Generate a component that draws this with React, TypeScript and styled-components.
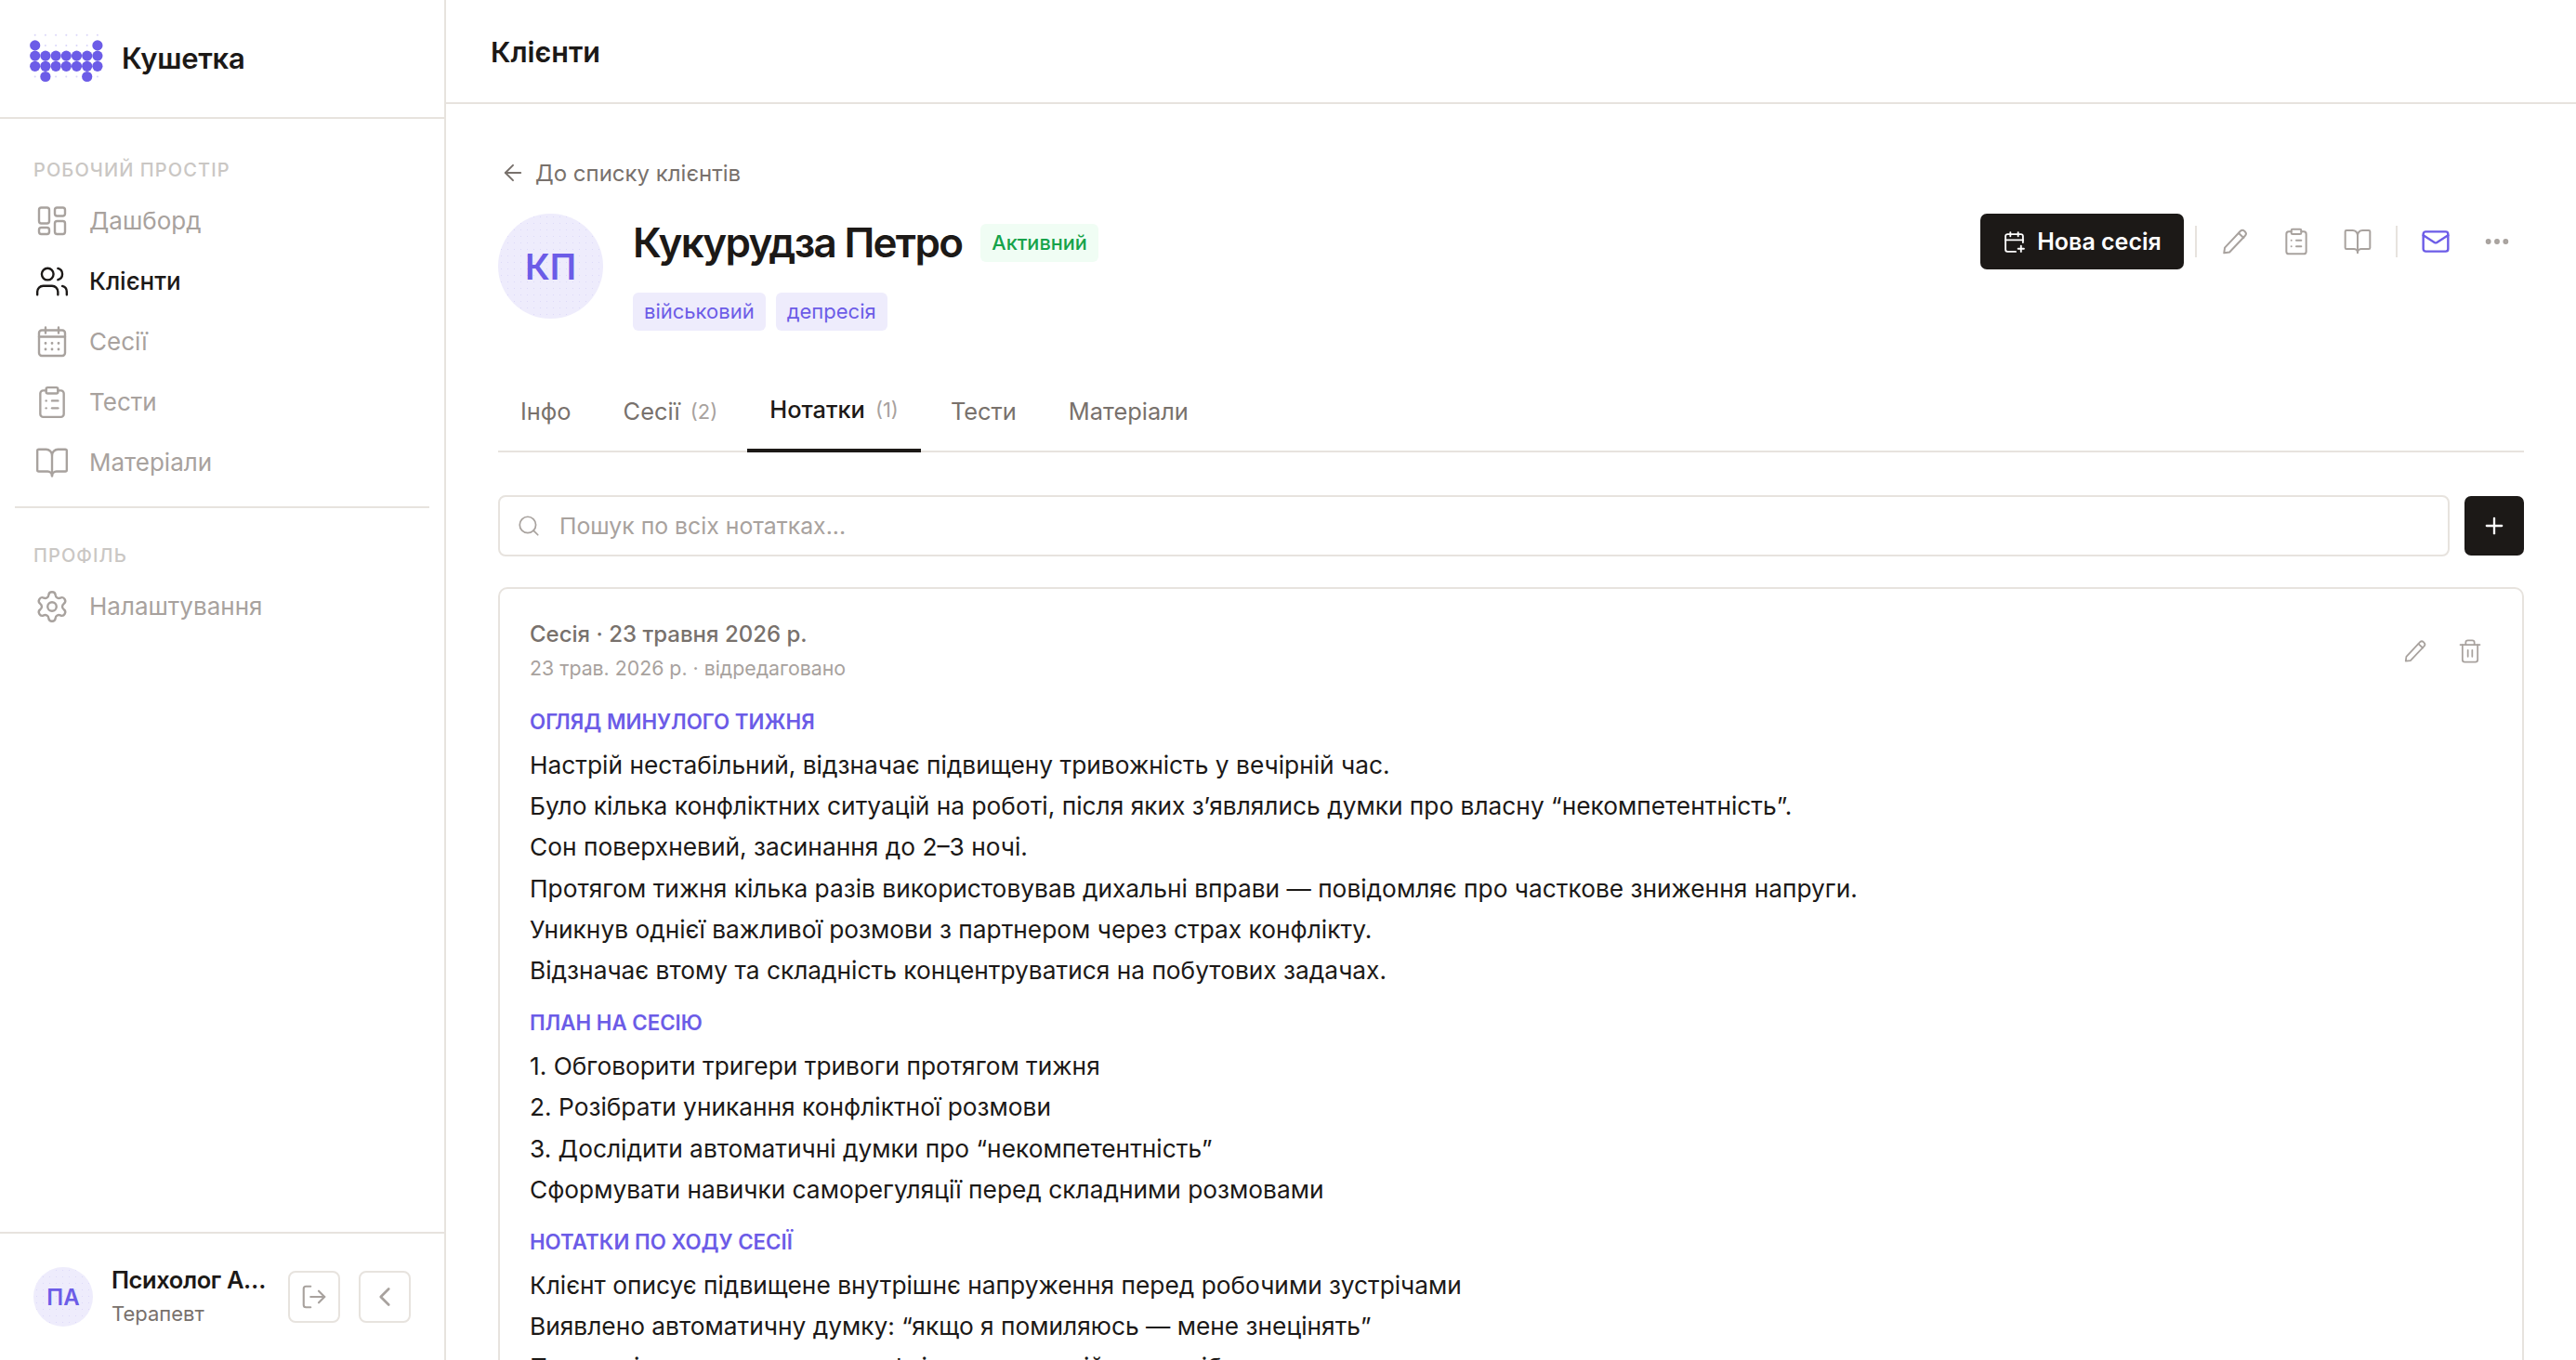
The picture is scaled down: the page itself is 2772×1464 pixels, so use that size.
import React from 'react';
import styled, { createGlobalStyle } from 'styled-components';
import {
  ArrowLeft, Search, Plus, Trash2, Mail, Ellipsis, BookOpen, ClipboardList,
  Settings, Users, LogOut, ChevronLeft, CalendarPlus,
} from 'lucide-react';

const ink = '#1c1917';
const violet = '#6c5ce7';
const line = '#e7e3de';
const muted = '#a8a29e';
const body = '#78716c';
const tint = '#eeecfc';

const Global = createGlobalStyle`
  html, body { margin: 0; padding: 0; height: 100%; background: #fff; overflow: hidden; }
  body { font-family: Inter, "Noto Sans", sans-serif; color: ${ink}; }
  #root { height: 100%; }
`;

const Shell = styled.div`
  display: flex;
  height: 1464px;
  width: 2772px;
  overflow: hidden;
`;

const Sidebar = styled.aside`
  width: 480px;
  flex: none;
  box-sizing: border-box;
  border-right: 2px solid ${line};
  display: flex;
  flex-direction: column;
`;

const Brand = styled.div`
  height: 128px;
  box-sizing: border-box;
  border-bottom: 2px solid ${line};
  display: flex;
  align-items: center;
  gap: 19px;
  padding: 0 0 4px 32px;
`;

const BrandName = styled.div`
  font-size: 31px;
  font-weight: 600;
  letter-spacing: -0.3px;
  padding-top: 2px;
`;

const SideNav = styled.nav`
  flex: 1;
  padding: 42px 16px 0;
`;

const SectionLabel = styled.div`
  font-size: 20px;
  font-weight: 500;
  letter-spacing: 1.1px;
  color: #cac7c4;
  padding-left: 20px;
  height: 26px;
  line-height: 26px;
`;

const NavItem = styled.div<{ $active?: boolean }>`
  display: flex;
  align-items: center;
  height: 65px;
  padding-left: 21px;
  gap: 21px;
  font-size: 26px;
  color: ${(p) => (p.$active ? ink : muted)};
  font-weight: ${(p) => (p.$active ? 500 : 400)};
  svg { color: ${(p) => (p.$active ? ink : muted)}; flex: none; }
`;

const NavList = styled.div`
  margin-top: 9px;
`;

const SideDivider = styled.div`
  height: 2px;
  background: ${line};
  margin: 15px 0 38px;
`;

const UserBar = styled.div`
  height: 138px;
  box-sizing: border-box;
  border-top: 2px solid ${line};
  display: flex;
  align-items: center;
  padding: 0 36px;
`;

const Avatar = styled.div<{ $size: number; $font: number; $weight: number }>`
  width: ${(p) => p.$size}px;
  height: ${(p) => p.$size}px;
  border-radius: 50%;
  background-color: ${tint};
  background-image: radial-gradient(rgba(108, 92, 231, 0.13) 0.8px, transparent 1px);
  background-size: 7px 7px;
  color: ${violet};
  font-size: ${(p) => p.$font}px;
  font-weight: ${(p) => p.$weight};
  display: flex;
  align-items: center;
  justify-content: center;
  flex: none;
`;

const UserText = styled.div`
  margin-left: 20px;
  width: 168px;
  flex: none;
`;

const UserName = styled.div`
  font-size: 25.5px;
  font-weight: 600;
  letter-spacing: -0.4px;
  white-space: nowrap;
  overflow: hidden;
  text-overflow: ellipsis;
  line-height: 36px;
`;

const UserRole = styled.div`
  font-size: 22px;
  color: ${body};
  line-height: 36px;
`;

const UserButtons = styled.div`
  display: flex;
  gap: 20px;
  margin-left: 22px;
`;

const SquareBtn = styled.div`
  width: 56px;
  height: 56px;
  box-sizing: border-box;
  border: 2px solid ${line};
  border-radius: 8px;
  display: flex;
  align-items: center;
  justify-content: center;
  color: ${muted};
  flex: none;
`;

const Main = styled.main`
  flex: 1;
  min-width: 0;
  display: flex;
  flex-direction: column;
`;

const TopBar = styled.header`
  height: 112px;
  box-sizing: border-box;
  border-bottom: 2px solid ${line};
  display: flex;
  align-items: center;
  padding: 0 0 0 48px;
  font-size: 30.5px;
  font-weight: 600;
`;

const Content = styled.div`
  padding: 56px 56px 0;
  flex: 1;
  overflow: hidden;
`;

const BackLink = styled.div`
  display: flex;
  align-items: center;
  gap: 10px;
  height: 36px;
  padding-left: 2px;
  font-size: 24px;
  color: ${body};
`;

const Head = styled.div`
  display: flex;
  justify-content: space-between;
  align-items: flex-start;
  margin-top: 26px;
`;

const HeadLeft = styled.div`
  display: flex;
  gap: 32px;
`;

const NameRow = styled.div`
  display: flex;
  align-items: center;
  gap: 20px;
  height: 62px;
`;

const Name = styled.h1`
  margin: 0;
  font-size: 44px;
  font-weight: 600;
  letter-spacing: -1.7px;
`;

const Status = styled.span`
  background: #f0fdf4;
  color: #16a34a;
  font-size: 21.7px;
  font-weight: 500;
  padding: 0 12px;
  height: 41px;
  line-height: 41px;
  border-radius: 6px;
`;

const Tags = styled.div`
  display: flex;
  gap: 11px;
  margin-top: 23px;
`;

const Tag = styled.span`
  background: ${tint};
  color: ${violet};
  font-size: 22px;
  font-weight: 400;
  padding: 0 12px;
  height: 41px;
  line-height: 41px;
  border-radius: 6px;
`;

const Actions = styled.div`
  display: flex;
  align-items: center;
  height: 60px;
  margin-right: -4px;
`;

const Primary = styled.div`
  display: flex;
  align-items: center;
  justify-content: center;
  gap: 12px;
  width: 219px;
  height: 60px;
  background: ${ink};
  color: #fff;
  border-radius: 7px;
  font-size: 25px;
  font-weight: 600;
  margin-right: 4px;
`;

const VSep = styled.div`
  width: 2px;
  height: 34px;
  background: ${line};
  margin: 0 8px;
`;

const IconBtn = styled.div<{ $violet?: boolean }>`
  width: 66px;
  display: flex;
  justify-content: center;
  color: ${(p) => (p.$violet ? violet : muted)};
`;

const Tabs = styled.div`
  display: flex;
  gap: 8px;
  margin-top: 44px;
  border-bottom: 2px solid ${line};
  height: 87px;
  box-sizing: border-box;
`;

const Tab = styled.div<{ $active?: boolean }>`
  padding: 0 24px 2px;
  height: 87px;
  box-sizing: border-box;
  display: flex;
  align-items: center;
  gap: 11px;
  font-size: 25.4px;
  color: ${(p) => (p.$active ? ink : body)};
  font-weight: ${(p) => (p.$active ? 500 : 400)};
  border-bottom: ${(p) => (p.$active ? `4px solid ${ink}` : '0')};
`;

const Count = styled.span`
  font-size: 22px;
  font-weight: 400;
  color: ${muted};
`;

const SearchRow = styled.div`
  display: flex;
  align-items: center;
  gap: 16px;
  margin-top: 46px;
`;

const SearchBox = styled.div`
  flex: 1;
  height: 66px;
  box-sizing: border-box;
  border: 2px solid ${line};
  border-radius: 8px;
  display: flex;
  align-items: center;
  gap: 20px;
  padding-left: 18px;
  font-size: 24.8px;
  color: ${muted};
`;

const AddBtn = styled.div`
  width: 64px;
  height: 64px;
  background: ${ink};
  border-radius: 7px;
  color: #fff;
  display: flex;
  align-items: center;
  justify-content: center;
`;

const Card = styled.article`
  position: relative;
  margin-top: 33px;
  box-sizing: border-box;
  border: 2px solid ${line};
  border-radius: 10px;
  padding: 31px 32px 0;
`;

const CardActions = styled.div`
  position: absolute;
  top: 53px;
  right: 42px;
  display: flex;
  gap: 31px;
  color: ${muted};
`;

const NoteTitle = styled.div`
  font-size: 24px;
  font-weight: 500;
  color: ${body};
  line-height: 36px;
`;

const NoteMeta = styled.div`
  font-size: 21.3px;
  color: ${muted};
  line-height: 36px;
  padding-bottom: 6px;
`;

const Heading = styled.div`
  font-size: 22.3px;
  font-weight: 600;
  color: ${violet};
  line-height: 34px;
  margin-top: 17px;
  margin-bottom: 8px;
  text-transform: uppercase;
`;

const Line = styled.p`
  margin: 0;
  font-size: 26.3px;
  line-height: 44.2px;
  color: ${ink};
  white-space: nowrap;
`;

function Logo() {
  const cols = [37.7, 48.9, 60.1, 71.3, 82.5, 93.7, 104.9];
  const rows = [40.7, 51.9, 63.1, 74.3, 85.5];
  const big = (r: number, c: number) =>
    r === 2 || r === 3 || (r === 1 && (c === 0 || c === 6)) || (r === 4 && (c === 1 || c === 5));
  return (
    <svg width="80" height="56" viewBox="32 36 80 56">
      {rows.map((y, r) =>
        cols.map((x, c) =>
          big(r, c) ? (
            <circle key={`${r}-${c}`} cx={x} cy={y} r={5.6} fill={violet} />
          ) : (
            <circle key={`${r}-${c}`} cx={x} cy={y} r={1} fill={violet} opacity={0.25} />
          ),
        ),
      )}
    </svg>
  );
}

function Dashboard() {
  return (
    <svg width={38} height={38} viewBox="0 0 38 38" fill="none" stroke="currentColor" strokeWidth="2.4" strokeLinejoin="round">
      <rect x="5" y="4.5" width="11" height="17" rx="2.4" />
      <rect x="22" y="4.5" width="11" height="9" rx="2.4" />
      <rect x="22" y="19" width="11" height="14" rx="2.4" />
      <rect x="5" y="26" width="11" height="7" rx="2.4" />
    </svg>
  );
}

function SessionsIcon() {
  return (
    <svg width={38} height={38} viewBox="0 0 38 38" fill="none" stroke="currentColor" strokeWidth="2.4" strokeLinecap="round">
      <rect x="5" y="6.5" width="28" height="27.5" rx="3" />
      <path d="M12 3.5v6M26 3.5v6M5 13.5h28" />
      <path d="M12 20.5h.01M19 20.5h.01M26 20.5h.01M12 27h.01M19 27h.01M26 27h.01" strokeWidth="2.8" />
    </svg>
  );
}

function SlimPencil({ size }: { size: number }) {
  return (
    <svg width={size} height={size} viewBox="0 0 24 24" fill="none" stroke="currentColor" strokeWidth="1.5" strokeLinecap="round" strokeLinejoin="round">
      <path d="M3.2 21.2 3.8 17 16.4 3.6a2.3 2.3 0 0 1 3.2-.1l.6.6a2.3 2.3 0 0 1 0 3.2L7.6 20.6z" />
      <path d="M15 5.2l4 3.8" />
    </svg>
  );
}

const navIcon = 38;
const bar = 32;

export default function App() {
  return (
    <>
      <Global />
      <Shell>
        <Sidebar>
          <Brand>
            <Logo />
            <BrandName>Кушетка</BrandName>
          </Brand>
          <SideNav>
            <SectionLabel>РОБОЧИЙ ПРОСТІР</SectionLabel>
            <NavList>
              <NavItem><Dashboard /><span>Дашборд</span></NavItem>
              <NavItem $active><Users size={navIcon} strokeWidth={1.5} /><span>Клієнти</span></NavItem>
              <NavItem><SessionsIcon /><span>Сесії</span></NavItem>
              <NavItem><ClipboardList size={navIcon} strokeWidth={1.5} /><span>Тести</span></NavItem>
              <NavItem><BookOpen size={navIcon} strokeWidth={1.5} /><span>Матеріали</span></NavItem>
            </NavList>
            <SideDivider />
            <SectionLabel>ПРОФІЛЬ</SectionLabel>
            <NavList>
              <NavItem><Settings size={navIcon} strokeWidth={1.5} /><span>Налаштування</span></NavItem>
            </NavList>
          </SideNav>
          <UserBar>
            <Avatar $size={64} $font={24} $weight={600}>ПА</Avatar>
            <UserText>
              <UserName>Психолог Анна</UserName>
              <UserRole>Терапевт</UserRole>
            </UserText>
            <UserButtons>
              <SquareBtn><LogOut size={30} strokeWidth={1.7} /></SquareBtn>
              <SquareBtn><ChevronLeft size={34} strokeWidth={1.9} /></SquareBtn>
            </UserButtons>
          </UserBar>
        </Sidebar>
        <Main>
          <TopBar>Клієнти</TopBar>
          <Content>
            <BackLink><ArrowLeft size={28} strokeWidth={1.7} /><span>До списку клієнтів</span></BackLink>
            <Head>
              <HeadLeft>
                <Avatar $size={113} $font={38} $weight={600}>КП</Avatar>
                <div>
                  <NameRow><Name>Кукурудза Петро</Name><Status>Активний</Status></NameRow>
                  <Tags><Tag>військовий</Tag><Tag>депресія</Tag></Tags>
                </div>
              </HeadLeft>
              <Actions>
                <Primary><CalendarPlus size={25} strokeWidth={1.8} /><span>Нова сесія</span></Primary>
                <VSep />
                <IconBtn><SlimPencil size={bar} /></IconBtn>
                <IconBtn><ClipboardList size={bar} strokeWidth={1.5} /></IconBtn>
                <IconBtn><BookOpen size={bar} strokeWidth={1.5} /></IconBtn>
                <VSep />
                <IconBtn $violet><Mail size={bar} strokeWidth={1.8} /></IconBtn>
                <IconBtn><Ellipsis size={bar} strokeWidth={2.4} /></IconBtn>
              </Actions>
            </Head>
            <Tabs>
              <Tab>Інфо</Tab>
              <Tab>Сесії<Count>(2)</Count></Tab>
              <Tab $active>Нотатки<Count>(1)</Count></Tab>
              <Tab>Тести</Tab>
              <Tab>Матеріали</Tab>
            </Tabs>
            <SearchRow>
              <SearchBox><Search size={26} strokeWidth={1.6} /><span>Пошук по всіх нотатках...</span></SearchBox>
              <AddBtn><Plus size={28} strokeWidth={2} /></AddBtn>
            </SearchRow>
            <Card>
              <CardActions>
                <SlimPencil size={28} />
                <Trash2 size={28} strokeWidth={1.5} />
              </CardActions>
              <NoteTitle>Сесія · 23 травня 2026 р.</NoteTitle>
              <NoteMeta>23 трав. 2026 р. · відредаговано</NoteMeta>
              <Heading>Огляд минулого тижня</Heading>
              <Line>Настрій нестабільний, відзначає підвищену тривожність у вечірній час.</Line>
              <Line>Було кілька конфліктних ситуацій на роботі, після яких з’являлись думки про власну “некомпетентність”.</Line>
              <Line>Сон поверхневий, засинання до 2–3 ночі.</Line>
              <Line>Протягом тижня кілька разів використовував дихальні вправи — повідомляє про часткове зниження напруги.</Line>
              <Line>Уникнув однієї важливої розмови з партнером через страх конфлікту.</Line>
              <Line>Відзначає втому та складність концентруватися на побутових задачах.</Line>
              <Heading>План на сесію</Heading>
              <Line>1. Обговорити тригери тривоги протягом тижня</Line>
              <Line>2. Розібрати уникання конфліктної розмови</Line>
              <Line>3. Дослідити автоматичні думки про “некомпетентність”</Line>
              <Line>Сформувати навички саморегуляції перед складними розмовами</Line>
              <Heading>Нотатки по ходу сесії</Heading>
              <Line>Клієнт описує підвищене внутрішнє напруження перед робочими зустрічами</Line>
              <Line>Виявлено автоматичну думку: “якщо я помиляюсь — мене знецінять”</Line>
              <Line>Проаналізовано уникання конфліктних ситуацій як спосіб зниження тривоги</Line>
            </Card>
          </Content>
        </Main>
      </Shell>
    </>
  );
}
